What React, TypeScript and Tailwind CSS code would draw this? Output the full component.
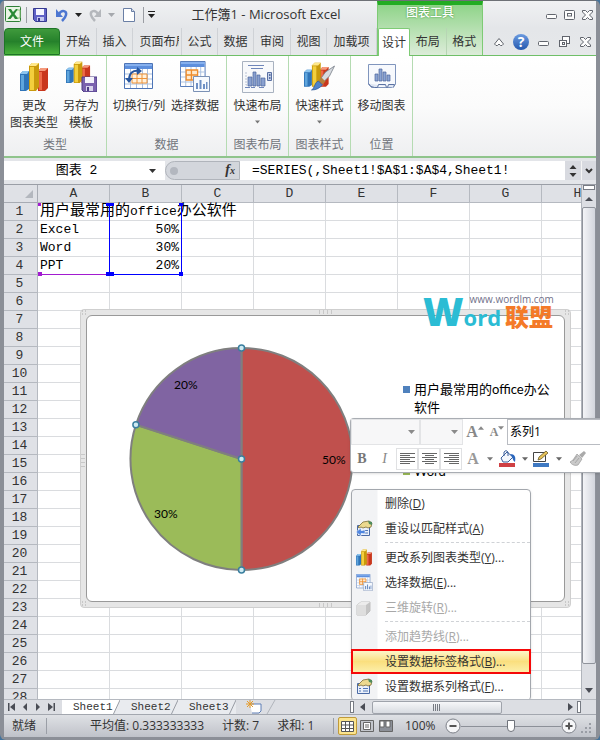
import type { ReactNode } from 'react'

const TABS = [
  { label: '开始', width: 'w-[37px]' },
  { label: '插入', width: 'w-9' },
  { label: '页面布局', width: 'w-[49px]' },
  { label: '公式', width: 'w-9' },
  { label: '数据', width: 'w-9' },
  { label: '审阅', width: 'w-[37px]' },
  { label: '视图', width: 'w-9' },
  { label: '加载项', width: 'flex-1' },
] as const

const COLUMNS = ['A', 'B', 'C', 'D', 'E', 'F', 'G', 'H'] as const

const ROWS = Array.from({ length: 28 }, (_, i) => i + 1)

const CELLS: Record<number, [string, string]> = {
  2: ['Excel', '50%'],
  3: ['Word', '30%'],
  4: ['PPT', '20%'],
}

const MONO = "font-['Liberation_Mono','Noto_Sans_CJK_SC',monospace]"

/* ── Small shared pieces ── */

function Caret({ className = 'text-[#555]' }: { className?: string }) {
  return (
    <svg width="7" height="4" viewBox="0 0 7 4" className={className} aria-hidden="true">
      <path d="M0 0h7L3.5 4z" fill="currentColor" />
    </svg>
  )
}

function Arrow({ d }: { d: string }) {
  return (
    <svg width="10" height="10" viewBox="0 0 10 10" className="text-[#4a4d55]" aria-hidden="true">
      <path d={d} fill="currentColor" />
    </svg>
  )
}

/* Three 3D columns, drawn in a 28x30 box */
function Bars() {
  return (
    <>
      <path d="M0 12l3-3h6v18l-3 2H0z" fill="#2f74b8" />
      <path d="M0 12l3-3h6l-2 3z" fill="#8cc4ee" />
      <path d="M1 13h3v15H1z" fill="#5fa5dc" />
      <path d="M18 9l3-3h7v20l-3 3h-7z" fill="#c9371d" />
      <path d="M18 9l3-3h7l-3 3z" fill="#f59a7c" />
      <path d="M19 10h3v18h-3z" fill="#ee6a48" />
      <path d="M9 4l3-3h7v24l-3 4H9z" fill="#c99a0c" />
      <path d="M9 4l3-3h7l-3 3z" fill="#ffe88a" />
      <path d="M10 5h4v23h-4z" fill="#f3cf3d" />
    </>
  )
}

function BarsIcon({ className = 'w-7 h-[30px]' }: { className?: string }) {
  return (
    <svg viewBox="0 0 28 30" className={className} aria-hidden="true">
      <Bars />
    </svg>
  )
}

function SaveTemplateIcon() {
  return (
    <svg width="31" height="31" viewBox="0 0 31 31" aria-hidden="true">
      <g transform="scale(.86 .76)">
        <Bars />
      </g>
      <path d="M16 16h15v15H18l-2-2z" fill="#7b62ae" stroke="#4d3d86" />
      <path d="M19 16h9v6h-9z" fill="#f4f2fb" />
      <path d="M20 25h7v5h-7z" fill="#d9d4ec" />
      <path d="M21 26h2v4h-2z" fill="#4d3d86" />
    </svg>
  )
}

function SheetBase() {
  return (
    <>
      <path d="M.5.5h28v25H.5z" fill="#fff" stroke="#4d74b6" />
      <path d="M1 1h27v5H1z" fill="#5d8fdd" />
      <path d="M1 1h27v2H1z" fill="#86b0ee" />
      <path d="M1 11h27M1 16h27M1 21h27M6.5 6v19M12.5 6v19M18.5 6v19M23.5 6v19" stroke="#a9bfdf" fill="none" />
    </>
  )
}

function SwapIcon() {
  return (
    <svg width="30" height="27" viewBox="0 0 30 27" aria-hidden="true">
      <SheetBase />
      <path d="M8 11h15v9H8zM13 11v9M18 11v9M8 15.5h15" fill="#fff1dd" stroke="#ee9338" />
      <path d="M5 17C5 10 9 7 15 8" fill="none" stroke="#27569f" strokeWidth="2" />
      <path d="M13 4l5 4-5 4zM1 15h8l-4 5z" fill="#27569f" />
    </svg>
  )
}

function SelectDataIcon({ className = 'w-[30px] h-[31px]' }: { className?: string }) {
  return (
    <svg viewBox="0 0 30 31" className={className} aria-hidden="true">
      <g transform="scale(.88 1)">
        <SheetBase />
        <path d="M7 9h13v10H7zM13 9v10M7 14h13" fill="#ffe9cc" stroke="#ee8c2b" strokeWidth="1.5" />
      </g>
      <path d="M13.5 15.5h16v15h-16z" fill="#f7fafe" stroke="#7b91b5" />
      <path d="M16 22h2v6h-2zM19.5 19h2v9h-2zM23 23h2v5h-2zM26 21h1.5v7H26z" fill="#6d8fc4" />
    </svg>
  )
}

function LayoutIcon() {
  return (
    <svg width="32" height="32" viewBox="0 0 32 32" aria-hidden="true">
      <path d="M.5.5h31v31H.5z" fill="#f8f9fb" stroke="#a9b2c0" />
      <path d="M6 4.5h16M9 7.5h12M3 26.5h5M9 26.5h4M17 26.5h5" stroke="#6f86ba" />
      <path d="M4 11v13h19" fill="none" stroke="#b7c0d2" strokeDasharray="2 1" />
      <path d="M6 16h4v9H6zM11 11h3v14h-3zM15 14h3v11h-3zM19 17h4v8h-4z" fill="#89a0cf" stroke="#4c649b" strokeWidth=".7" />
      <path d="M25.5 11.5h4v8h-4z" fill="#c6d2e9" stroke="#5a70a3" />
      <path d="M27 13h1.5v2H27zM27 16h1.5v2H27z" fill="#5a70a3" />
    </svg>
  )
}

function StyleIcon() {
  return (
    <svg width="31" height="30" viewBox="0 0 31 30" aria-hidden="true">
      <g transform="scale(.88 .85)">
        <Bars />
      </g>
      <path d="M30.5 4l-5 10-6 6-3-3 5-7z" fill="#d8dbe0" stroke="#777d88" strokeWidth=".8" />
      <path d="M17.5 15.5l4 4-3 3-4-4z" fill="#b67f3c" />
      <path d="M14.5 19l4 4c-3 3-6 5-11 5 3-1 3-8 7-9z" fill="#4f83c9" stroke="#2a5596" strokeWidth=".7" />
    </svg>
  )
}

function MoveChartIcon() {
  return (
    <svg width="30" height="28" viewBox="0 0 30 28" aria-hidden="true">
      <path d="M1.5 1.5h27v20l-3 3h-21l-3-3z" fill="#f7f9fd" stroke="#8095bd" />
      <path d="M1.5 20.5q2 4 6 4h3l1-3h7l1 3h1l1-3h6l-1 3" fill="#dfe6f3" stroke="#5b72a3" />
      <path d="M8 11h3v7H8zM12 6h3v12h-3zM16 9h3v9h-3zM20 12h3v6h-3z" fill="#8ba4d3" stroke="#4c649b" strokeWidth=".7" />
    </svg>
  )
}

/* Hand over a property sheet; the reset variant adds a blue arrow */
function PropertiesIcon({ reset = false }: { reset?: boolean }) {
  return (
    <svg width="17" height="17" viewBox="0 0 17 17" aria-hidden="true">
      <path d="M1.5 5.5h12v10h-12z" fill="#eaf0fb" stroke="#4a6aa5" />
      <path d="M3 10.5h2M3 13h2M7 10.5h5M7 13h5" stroke="#4f76b5" />
      <path d="M2 7l5-5 6-1 3 2-1 4-3 1-2-1-3 1-2-1-2 1z" fill="#ecd98f" stroke="#7a6a35" strokeWidth=".8" />
      <path d="M12 1l4 1v3l-3-1z" fill="#4e8b5c" />
      {reset && <path d="M0 12l5-4v2.5h4v3H5V16z" fill="#4f86e0" stroke="#fff" strokeWidth=".5" />}
    </svg>
  )
}

function CubeIcon() {
  return (
    <svg width="16" height="16" viewBox="0 0 16 16" aria-hidden="true">
      <path d="M1 5l4-3h9v9l-4 4H1z" fill="#c4c4c4" stroke="#c0c0c0" strokeLinejoin="round" />
      <path d="M1 5h9v10H1z" fill="#dedede" />
      <path d="M1 5l4-3h9l-4 3z" fill="#ececec" />
    </svg>
  )
}

/* ── Title bar and tabs ── */

function WindowGlyph({ kind }: { kind: 'min' | 'max' | 'restore' | 'close' }) {
  return (
    <svg width="13" height="12" viewBox="0 0 13 12" fill="#fdfdfd" stroke="#61656d" aria-hidden="true">
      {kind === 'min' && <rect x="1.5" y="5.5" width="10" height="4" rx="1" />}
      {kind === 'max' && (
        <>
          <rect x="1.5" y="1.5" width="10" height="9" rx="1" />
          <rect x="4.5" y="4.5" width="4" height="2.5" />
        </>
      )}
      {kind === 'restore' && (
        <>
          <rect x="4.5" y=".5" width="7" height="7" />
          <rect x="1.5" y="4.5" width="7" height="6" />
          <rect x="4.5" y="6.5" width="2" height="2" />
        </>
      )}
      {kind === 'close' && <path d="M1.5 1.5h3l2 2 2-2h3v1.5L8.5 6l3 3v1.5h-3l-2-2-2 2h-3V9l3-3-3-3z" />}
    </svg>
  )
}

function QuickAccess() {
  return (
    <div className="flex h-[27px] items-center pl-px">
      <svg width="17" height="17" viewBox="0 0 17 17" className="mr-1" aria-hidden="true">
        <rect x=".5" y=".5" width="15" height="15" rx="1" fill="#e9f5e4" stroke="#2f8037" />
        <path d="M3 3h3l2 3 3-3h2L9.500 8l4 5H10l-2-3-2.500 3H2.500L6.500 8z" fill="#2a8a35" />
        <path d="M12 4h3v8h-3" fill="none" stroke="#8abf7d" />
      </svg>
      <span className="mr-1.5 h-4 w-px bg-[#9a9da3]" />
      <button type="button" aria-label="保存">
        <svg width="14" height="14" viewBox="0 0 14 14" aria-hidden="true">
          <path d="M.5.5h13v13h-11l-2-2z" fill="#5f62c6" stroke="#363a91" />
          <path d="M3 1h8v6H3z" fill="#f5f6ff" />
          <path d="M4 9h7v4H4z" fill="#c4c8ef" />
          <path d="M5 10h2v3H5z" fill="#363a91" />
        </svg>
      </button>
      <button type="button" aria-label="撤消" className="ml-2 flex items-center gap-1.5">
        <svg width="14" height="14" viewBox="0 0 14 14" aria-hidden="true">
          <path d="M4 6c3-5 8-3 7 1-.4 2-2 4-4 6" fill="none" stroke="#4c76d1" strokeWidth="2.5" />
          <path d="M1 1v8h7z" fill="#4c76d1" />
        </svg>
        <Caret className="text-[#222]" />
      </button>
      <button type="button" aria-label="恢复" className="ml-1.5 flex items-center gap-1.5">
        <svg width="14" height="14" viewBox="0 0 14 14" aria-hidden="true">
          <path d="M10 6C7 1 2 3 3 7c.4 2 2 4 4 6" fill="none" stroke="#b4b7bc" strokeWidth="2.5" />
          <path d="M13 1v8H6z" fill="#b4b7bc" />
        </svg>
        <Caret className="text-[#a5a8ad]" />
      </button>
      <button type="button" aria-label="新建" className="ml-2">
        <svg width="12" height="14" viewBox="0 0 12 14" aria-hidden="true">
          <path d="M.5.5h8l3 3v10H.5z" fill="#fff" stroke="#6a7fa5" />
          <path d="M8.500.5v3h3" fill="#d4deee" stroke="#6a7fa5" />
        </svg>
      </button>
      <span className="mr-1 ml-2 h-4 w-px bg-[#9a9da3]" />
      <button type="button" aria-label="自定义快速访问工具栏" className="flex flex-col gap-0.5">
        <span className="h-px w-[7px] bg-[#222]" />
        <Caret className="text-[#222]" />
      </button>
    </div>
  )
}

function Header() {
  return (
    <header className="flex h-[55px] shrink-0 border-b border-[#6fbf68] bg-linear-to-b from-[#f0f1f3] via-[#e4e6e9] to-[#e6e8ea] text-xs text-[#333]">
      <div className="flex w-[373px] shrink-0 flex-col">
        <div className="flex">
          <QuickAccess />
          <h1 className="flex-1 text-center text-[13px] leading-[26px] whitespace-nowrap">工作簿1 - Microsoft Excel</h1>
        </div>
        <nav className="flex h-[27px]" aria-label="功能区">
          <button type="button" className="w-14 rounded-t-sm border border-[#1e7527] bg-linear-to-b from-[#3f9a3c] via-[#25812b] to-[#49b23c] text-white">
            文件
          </button>
          {TABS.map(({ label, width }) => (
            <button
              key={label}
              type="button"
              className={`${width} flex justify-center overflow-hidden border-r border-[#cfd2d6] whitespace-nowrap leading-7`}
            >
              <span className={label.length === 4 ? 'ml-1 w-[39px] overflow-hidden' : ''}>{label}</span>
            </button>
          ))}
        </nav>
      </div>

      {/* Contextual chart tabs */}
      <div className="flex w-[106px] shrink-0 flex-col border-x border-t-4 border-[#7ecb75] border-t-[#22ac22] bg-linear-to-b from-[#8fd489] to-[#dcecd9]">
        <div className="h-[23px] text-center leading-4 font-medium text-white [text-shadow:0_0_2px_#2f8a2c]">图表工具</div>
        <nav className="flex h-[27px]" aria-label="图表工具">
          <button type="button" className="-mb-px h-7 w-8 rounded-t-xs border border-b-0 border-[#7ecb75] bg-white leading-7">
            设计
          </button>
          <button type="button" className="flex-1 border-r border-[#b7d5b4] leading-7">布局</button>
          <button type="button" className="flex-1 leading-7">格式</button>
        </nav>
      </div>

      <div className="flex flex-1 flex-col">
        <div className="flex h-[27px] items-center justify-end gap-[5px] pr-0.5">
          <button type="button" aria-label="最小化"><WindowGlyph kind="min" /></button>
          <button type="button" aria-label="最大化"><WindowGlyph kind="max" /></button>
          <button type="button" aria-label="关闭"><WindowGlyph kind="close" /></button>
        </div>
        <div className="flex h-[27px] items-center justify-end gap-2 pr-1">
          <button type="button" aria-label="折叠功能区">
            <svg width="12" height="10" viewBox="0 0 12 10" fill="#fdfdfd" stroke="#61656d" aria-hidden="true">
              <path d="M1.500 7l4.500-5.500L10.500 7 9 8.500H7.500L6 7 4.500 8.500H3z" />
            </svg>
          </button>
          <button type="button" aria-label="帮助" className="size-4 rounded-full bg-linear-to-b from-[#6c9be0] to-[#2558ae] text-sm leading-4 font-bold text-white">
            ?
          </button>
          <button type="button" aria-label="最小化工作簿"><WindowGlyph kind="min" /></button>
          <button type="button" aria-label="还原工作簿"><WindowGlyph kind="restore" /></button>
          <button type="button" aria-label="关闭工作簿"><WindowGlyph kind="close" /></button>
        </div>
      </div>
    </header>
  )
}

/* ── Ribbon ── */

function RibbonGroup({ title, className, children }: { title: string; className: string; children: ReactNode }) {
  return (
    <section className={`${className} flex shrink-0 flex-col border-r border-[#b5dbb2]`} aria-label={title}>
      <div className="flex flex-1 justify-center">{children}</div>
      <div className="h-[22px] text-center leading-[22px] text-[#71757c]">{title}</div>
    </section>
  )
}

function RibbonButton({ icon, lines, menu, className }: { icon: ReactNode; lines: string[]; menu?: boolean; className: string }) {
  return (
    <button type="button" className={`${className} flex flex-col items-center whitespace-nowrap`}>
      <span className="flex h-[41px] items-center justify-center">{icon}</span>
      {lines.map((line) => (
        <span key={line} className="leading-[17px]">{line}</span>
      ))}
      {menu && <span className="flex h-4 items-center"><Caret className="w-[5px] text-[#777]" /></span>}
    </button>
  )
}

function Ribbon() {
  return (
    <div className="flex h-[102px] shrink-0 border-b-2 border-[#8fc48c] bg-linear-to-b from-white via-[#fbfbfb] to-[#eeeff1] text-xs text-[#333]">
      <RibbonGroup title="类型" className="w-[103px]">
        <RibbonButton icon={<BarsIcon />} lines={['更改', '图表类型']} className="w-[52px]" />
        <RibbonButton icon={<SaveTemplateIcon />} lines={['另存为', '模板']} className="w-[42px]" />
      </RibbonGroup>
      <RibbonGroup title="数据" className="w-[120px]">
        <RibbonButton icon={<SwapIcon />} lines={['切换行/列']} className="w-[57px]" />
        <RibbonButton icon={<SelectDataIcon />} lines={['选择数据']} className="w-[55px]" />
      </RibbonGroup>
      <RibbonGroup title="图表布局" className="w-[62px]">
        <RibbonButton icon={<LayoutIcon />} lines={['快速布局']} menu className="w-14" />
      </RibbonGroup>
      <RibbonGroup title="图表样式" className="w-[62px]">
        <RibbonButton icon={<StyleIcon />} lines={['快速样式']} menu className="w-14" />
      </RibbonGroup>
      <RibbonGroup title="位置" className="w-[62px]">
        <RibbonButton icon={<MoveChartIcon />} lines={['移动图表']} className="w-14" />
      </RibbonGroup>
    </div>
  )
}

function FormulaBar() {
  return (
    <div className={`${MONO} flex h-[27px] shrink-0 border-b border-[#9a9ea6] bg-[#e3e5e9] pt-[3px] pb-1 text-[13px] text-black`}>
      <input aria-label="名称框" defaultValue="图表 2" className="w-[145px] min-w-0 bg-white text-center outline-none" />
      <button type="button" aria-label="名称列表" className="flex w-4 items-center bg-white">
        <Caret className="text-[#333]" />
      </button>
      <div className="flex w-[75px] items-center justify-between rounded-l-full border border-[#b0b4bb] bg-[#d3d6dc] pr-1 pl-1">
        <span className="size-2 rounded-full bg-[#b3b7bf]" />
        <button type="button" aria-label="插入函数" className="font-['Liberation_Serif',serif] text-sm leading-4 font-bold text-[#333] italic">
          f<span className="text-[10px]">x</span>
        </button>
      </div>
      <input aria-label="编辑栏" defaultValue="=SERIES(,Sheet1!$A$1:$A$4,Sheet1!" className="min-w-0 flex-1 bg-white pl-3 outline-none" />
      <div className="flex w-4 flex-col items-center justify-center gap-1 bg-[#d8dae0]">
        <Caret className="w-2 rotate-180 text-[#333]" />
        <Caret className="w-2 text-[#333]" />
      </div>
      <button type="button" aria-label="展开编辑栏" className="flex w-[15px] items-center justify-center border-l border-[#f5f5f5] bg-[#d8dae0]">
        <svg width="8" height="6" viewBox="0 0 8 6" fill="none" stroke="#333" strokeWidth="2" aria-hidden="true">
          <path d="M1 1l3 3 3-3" />
        </svg>
      </button>
    </div>
  )
}

/* ── Worksheet ── */

function Worksheet() {
  return (
    <table className={`${MONO} w-[610px] table-fixed border-separate border-spacing-0 text-[13px] leading-[17px] text-black`}>
      <colgroup>
        <col className="w-[34px]" />
        {COLUMNS.map((c) => <col key={c} className="w-[72px]" />)}
      </colgroup>
      <thead>
        <tr className="h-[18px] bg-[#dfe1e6] text-[#333]">
          <th className="border-r border-b border-[#a7abb3] p-0">
            <svg width="8" height="8" viewBox="0 0 8 8" className="mr-1 ml-auto" aria-hidden="true">
              <path d="M8 0v8H0z" fill="#b3b7be" />
            </svg>
          </th>
          {COLUMNS.map((c) => (
            <th key={c} scope="col" className="border-r border-b border-[#b5b9c0] p-0 font-normal">{c}</th>
          ))}
        </tr>
      </thead>
      <tbody>
        {ROWS.map((row) => (
          <tr key={row} className="h-[18px]">
            <th scope="row" className="border-r border-b border-[#b5b9c0] bg-[#dfe1e6] p-0 pr-0.5 font-normal text-[#333]">{row}</th>
            {COLUMNS.map((c, i) => (
              <td
                key={c}
                className={`border-r border-b border-[#dadcdf] p-0 whitespace-nowrap ${i === 1 ? 'pr-0.5 text-right' : 'pl-0.5'}`}
              >
                {row === 1 && i === 0 ? (
                  <div className="h-[17px] w-0 text-[15px] leading-[17px]">
                    用户最常用的<span className="text-[13px]">office</span>办公软件
                  </div>
                ) : (
                  CELLS[row]?.[i]
                )}
              </td>
            ))}
          </tr>
        ))}
      </tbody>
    </table>
  )
}

/* Coloured range outlines: categories in purple, values in blue */
function RangeMarks() {
  return (
    <>
      <div className="absolute top-[18px] left-[34px] h-[72px] w-[72px] border-b border-b-[#a21bd0]">
        <span className="absolute top-0 left-0 size-[3px] bg-[#a21bd0]" />
        <span className="absolute -bottom-0.5 left-0 size-1 bg-[#a21bd0]" />
      </div>
      <div className="absolute top-[18px] left-[105px] h-[72px] w-[73px] border-x border-b border-x-[#0000ff] border-b-[#0000ff]">
        <span className="absolute top-0 -left-1 h-[3px] w-2 bg-[#0000ff]" />
        <span className="absolute top-0 -right-0.5 h-[3px] w-1 bg-[#0000ff]" />
        <span className="absolute -bottom-0.5 -left-1 h-1 w-2 bg-[#0000ff]" />
        <span className="absolute -right-0.5 -bottom-0.5 size-1 bg-[#0000ff]" />
      </div>
    </>
  )
}

const HANDLES = [
  [114.5, 4],
  [114.5, 115],
  [114.5, 226],
  [8.9, 80.7],
] as const

const LEGEND = [
  { label: '用户最常用的office办公软件', color: 'bg-[#4f81bd]' },
  { label: 'Excel', color: 'bg-[#c0504d]' },
  { label: 'Word', color: 'bg-[#9bbb59]' },
  { label: 'PPT', color: 'bg-[#8064a2]' },
] as const

function Grip({ className }: { className: string }) {
  return (
    <svg width="16" height="4" viewBox="0 0 16 4" className={`absolute ${className}`} aria-hidden="true">
      <path d="M1 1h14M1 3h14" stroke="#aaa" strokeDasharray="1 3" />
    </svg>
  )
}

/* Dotted handle on a corner of the chart frame */
function CornerGrip({ className }: { className: string }) {
  return (
    <svg width="6" height="6" viewBox="0 0 6 6" className={`absolute ${className}`} aria-hidden="true">
      <path d="M1 1h4M1 4h4" stroke="#aaa" strokeDasharray="1 2" />
    </svg>
  )
}

function Chart() {
  return (
    <figure className="absolute top-[124px] left-[76px] w-[491px] rounded-sm border border-[#cfcfcf] bg-[#e6e6e6] p-[5px]">
      <Grip className="top-0 left-1/2 -translate-x-1/2" />
      <Grip className="bottom-0 left-1/2 -translate-x-1/2" />
      <Grip className="top-1/2 -left-1.5 rotate-90" />
      <CornerGrip className="top-0 left-0" />
      <CornerGrip className="top-0 right-0" />
      <CornerGrip className="right-0 bottom-0" />
      <CornerGrip className="bottom-0 left-0" />
      <div className="flex h-[287px] rounded-md border border-[#999] bg-white pl-10 font-[Lato,'Noto_Sans_CJK_SC',sans-serif] text-[13px] text-black">
        <svg width="230" height="230" viewBox="0 0 230 230" className="mt-7 shrink-0 text-xs" role="img" aria-label="饼图">
          <g stroke="#7f7f7f" strokeWidth="2">
            <path d="M114.5 115V4a111 111 0 0 1 0 222z" fill="#c0504d" />
            <path d="M114.5 115v111A111 111 0 0 1 8.900 80.700z" fill="#9bbb59" />
            <path d="M114.5 115L8.900 80.700A111 111 0 0 1 114.500 4z" fill="#8064a2" />
          </g>
          <text x="195" y="120">50%</text>
          <text x="27" y="174">30%</text>
          <text x="47" y="45">20%</text>
          {HANDLES.map(([cx, cy]) => (
            <circle key={`${cx}-${cy}`} cx={cx} cy={cy} r="3" fill="#cfeaf2" stroke="#3a7f9f" strokeWidth="1.5" />
          ))}
        </svg>
        <ul className="mt-16 ml-[46px] flex w-[150px] flex-col gap-3.5">
          {LEGEND.map(({ label, color }) => (
            <li key={label} className="flex items-start gap-1 leading-[18px]">
              <span className={`mt-1.5 size-[7px] shrink-0 ${color}`} />
              <span className="break-all">{label}</span>
            </li>
          ))}
        </ul>
      </div>
    </figure>
  )
}

function Watermark() {
  return (
    <div className="absolute top-[108px] left-[419px] flex whitespace-nowrap font-['Open_Sans','Noto_Sans_CJK_SC',sans-serif] font-bold text-[#2bbcd4]">
      <span className="text-[39px] leading-9 font-extrabold">W</span>
      <div className="flex flex-col">
        <span className="pl-1.5 text-[10px] leading-3 font-normal text-[#71718a]">www.wordlm.com</span>
        <span className="flex text-[22px] leading-6">
          ord
          <span className="ml-1 text-2xl leading-6 font-black text-[#f47a28]">联盟</span>
        </span>
      </div>
    </div>
  )
}

/* ── Context menu ── */

function MenuItem({ icon, text, accessKey, tail = '...', disabled, active }: {
  icon?: ReactNode
  text: string
  accessKey: string
  tail?: string
  disabled?: boolean
  active?: boolean
}) {
  return (
    <li
      className={
        active
          ? '-mx-px border-2 border-[#f50808] bg-linear-to-b from-[#fdf5c9] via-[#fadf7e] to-[#fcefa9]'
          : 'border-x border-transparent'
      }
    >
      <button
        type="button"
        role="menuitem"
        disabled={disabled}
        className={`flex w-full items-center text-left ${active ? 'h-[21px]' : 'h-[25px]'} ${disabled ? 'text-[#a8a8a8]' : 'text-[#333]'}`}
      >
        <span className="flex w-8 shrink-0 pl-[3px]">{icon}</span>
        <span>
          {text}(<u>{accessKey}</u>){tail}
        </span>
      </button>
    </li>
  )
}

function MenuRule() {
  return <li role="separator" className="my-px ml-[33px] h-0.5 border-t border-dashed border-[#cfd2d6]" />
}

function ContextMenu() {
  return (
    <ul
      role="menu"
      className="absolute top-[304px] left-[347px] w-[180px] rounded-sm border border-[#a3a7ad] bg-linear-to-r from-[#f2f3f5] from-[25px] to-white to-[26px] py-px text-xs shadow-sm"
    >
      <MenuItem text="删除" accessKey="D" tail="" />
      <MenuItem icon={<PropertiesIcon reset />} text="重设以匹配样式" accessKey="A" tail="" />
      <MenuRule />
      <MenuItem icon={<BarsIcon className="h-[17px] w-4" />} text="更改系列图表类型" accessKey="Y" />
      <MenuItem icon={<SelectDataIcon className="h-[17px] w-[17px]" />} text="选择数据" accessKey="E" />
      <MenuItem icon={<CubeIcon />} text="三维旋转" accessKey="R" disabled />
      <MenuRule />
      <MenuItem text="添加趋势线" accessKey="R" disabled />
      <MenuItem text="设置数据标签格式" accessKey="B" active />
      <MenuItem icon={<PropertiesIcon />} text="设置数据系列格式" accessKey="F" />
    </ul>
  )
}

/* ── Floating format toolbar ── */

function AlignIcon({ d }: { d: string }) {
  return (
    <svg width="15" height="13" viewBox="0 0 15 13" stroke="#666" aria-hidden="true">
      <path d={d} />
    </svg>
  )
}

function EmptySelect({ label, className }: { label: string; className: string }) {
  return (
    <span className={`${className} flex items-center border border-[#e3e4e6] bg-[#f7f7f8] pr-1`}>
      <select aria-label={label} className="min-w-0 flex-1 appearance-none self-stretch outline-none">
        <option value="" />
      </select>
      <Caret className="text-[#8a8a8a]" />
    </span>
  )
}

function MiniToolbar() {
  return (
    <div className="absolute top-[418px] right-0 w-[250px] rounded-l-sm border border-r-0 border-[#a9adb3] bg-white text-xs text-black shadow-sm" role="toolbar" aria-label="格式">
      <div className="flex h-[26px]">
        <EmptySelect label="字体" className="w-[69px]" />
        <EmptySelect label="字号" className="w-[43px]" />
        <button type="button" aria-label="增大字体" className="flex w-6 items-center justify-center font-['Liberation_Serif',serif] text-base font-bold text-[#888]">
          A<Caret className="-mt-2 w-1.5 rotate-180 text-[#888]" />
        </button>
        <button type="button" aria-label="减小字体" className="flex w-5 items-center justify-center font-['Liberation_Serif',serif] text-xs font-bold text-[#888]">
          A<Caret className="-mt-2 w-1.5 text-[#888]" />
        </button>
        <select aria-label="图表元素" className="min-w-0 flex-1 appearance-none border border-r-0 border-[#b9bcc2] bg-white pl-0.5 outline-none">
          <option>系列1</option>
        </select>
      </div>
      <div className="flex h-[27px] items-center">
        <button type="button" aria-label="加粗" className="w-[22px] font-['Liberation_Serif',serif] text-sm font-bold text-[#777]">B</button>
        <button type="button" aria-label="倾斜" className="w-[23px] font-['Liberation_Serif',serif] text-sm text-[#888] italic">I</button>
        <button type="button" aria-label="左对齐" className="flex h-[22px] w-[22px] items-center justify-center border border-[#e0e1e3]">
          <AlignIcon d="M0 1.5h15M0 3.5h10M0 5.5h15M0 7.5h10M0 9.5h15M0 11.5h10" />
        </button>
        <button type="button" aria-label="居中" className="flex h-[22px] w-[22px] items-center justify-center border border-[#e0e1e3]">
          <AlignIcon d="M0 1.5h15M3 3.5h9M0 5.5h15M3 7.5h9M0 9.5h15M3 11.5h9" />
        </button>
        <button type="button" aria-label="右对齐" className="flex h-[22px] w-[22px] items-center justify-center border border-[#e0e1e3]">
          <AlignIcon d="M0 1.5h15M5 3.5h10M0 5.5h15M5 7.5h10M0 9.5h15M5 11.5h10" />
        </button>
        <button type="button" aria-label="字体颜色" className="flex w-9 items-center justify-center gap-2 font-['Liberation_Serif',serif] text-base font-bold text-[#999]">
          A<Caret className="w-1.5 text-[#777]" />
        </button>
        <button type="button" aria-label="填充颜色" className="flex w-[35px] items-center gap-1.5 pl-px">
          <svg width="17" height="17" viewBox="0 0 17 17" aria-hidden="true">
            <path d="M8 2l6 5-5 5H4L2 8z" fill="#f4f7fc" stroke="#3a5e9c" />
            <path d="M5 6V2q2-3 4 0v4" fill="none" stroke="#3a5e9c" />
            <path d="M11 4c5 0 6 3 5 8-2-1-2-3-3-5z" fill="#2a66bd" />
            <path d="M0 13h16v4H0z" fill="#cf4044" />
          </svg>
          <Caret className="w-1.5 text-[#666]" />
        </button>
        <button type="button" aria-label="轮廓颜色" className="flex w-[35px] items-center gap-1.5">
          <svg width="17" height="17" viewBox="0 0 17 17" aria-hidden="true">
            <path d="M.5 2.5h12v9H.5z" fill="#fff" stroke="#444" />
            <path d="M5 10l1-3 7-6 2 2-7 6z" fill="#e8c35a" stroke="#6a5a2a" strokeWidth=".8" />
            <path d="M0 13h16v4H0z" fill="#3f79c2" />
          </svg>
          <Caret className="w-1.5 text-[#666]" />
        </button>
        <button type="button" aria-label="格式刷" className="ml-0.5">
          <svg width="16" height="15" viewBox="0 0 16 15" aria-hidden="true">
            <path d="M14 0l2 2-4 5-3-3z" fill="#aaa" />
            <path d="M7 3l5 5-4 6c-3 1-6 0-8-3l3-2z" fill="#c9c9c9" stroke="#999" strokeWidth=".7" />
            <path d="M3 10l4-5M5 12l4-5" stroke="#999" strokeWidth=".7" />
          </svg>
        </button>
      </div>
    </div>
  )
}

/* ── Scroll bars, sheet tabs, status bar ── */

function VerticalScroll() {
  return (
    <div className="flex w-[15px] shrink-0 flex-col items-center border-l border-[#b0b4bb] bg-[#dcdee3]">
      <span className="h-[5px] w-3 shrink-0 border border-[#777b83] bg-white" />
      <button type="button" aria-label="向上滚动" className="flex h-[17px] items-center"><Arrow d="M1 7l4-4 4 4z" /></button>
      <span className="w-full flex-1 rounded-xs border border-[#8f939b] bg-linear-to-r from-[#f3f4f7] to-[#d3d6dd]" />
      <button type="button" aria-label="向下滚动" className="flex h-[35px] items-end pb-1"><Arrow d="M1 3h8L5 8z" /></button>
    </div>
  )
}

function SheetTab({ name, active }: { name: string; active?: boolean }) {
  return (
    <button
      type="button"
      className={`flex h-[15px] w-[58px] shrink-0 items-center justify-between pl-[11px] text-[#333] ${active ? 'bg-white' : 'bg-[#e9ebef]'}`}
    >
      <span className="w-0 whitespace-nowrap">{name}</span>
      <svg width="7" height="15" viewBox="0 0 7 15" className="shrink-0" aria-hidden="true">
        <path d="M7 0v15H0z" fill="#e9ebef" />
        <path d="M7 0L0 15" stroke="#989ca4" />
      </svg>
    </button>
  )
}

function SheetBar() {
  return (
    <div className="flex h-[15px] shrink-0 items-center border-t border-[#b5b9c0] bg-[#dcdee3]">
      <div className="flex w-[58px] items-center justify-between pr-1.5 pl-[3px]">
        <button type="button" aria-label="第一张工作表"><Arrow d="M1 1h1.500v8H1zM8 1v8L3 5z" /></button>
        <button type="button" aria-label="上一张工作表"><Arrow d="M7 1v8L3 5z" /></button>
        <button type="button" aria-label="下一张工作表"><Arrow d="M3 1v8l4-4z" /></button>
        <button type="button" aria-label="最后一张工作表"><Arrow d="M2 1v8l5-4zM7.500 1H9v8H7.500z" /></button>
      </div>
      <div className={`${MONO} flex text-[11px]`}>
        <SheetTab name="Sheet1" active />
        <SheetTab name="Sheet2" />
        <SheetTab name="Sheet3" />
      </div>
      <button type="button" aria-label="插入工作表" className="pl-2.5">
        <svg width="30" height="14" viewBox="0 0 30 14" aria-hidden="true">
          <path d="M4 4h11v7l-2 2H6" fill="#fff" stroke="#5c7db5" />
          <path d="M4 0v8M0 4h8M1 1l6 6M7 1L1 7" stroke="#e59b2a" />
          <path d="M29 0l-8 14" stroke="#b0b4bb" />
        </svg>
      </button>
      <div className="ml-auto flex h-[14px] w-[246px] items-center">
        <span className="h-3 w-1 border border-[#777b83] bg-white" />
        <button type="button" aria-label="向左滚动" className="px-1"><Arrow d="M7 1v8L2 5z" /></button>
        <span className="flex h-[13px] w-[130px] items-center justify-center rounded-xs border border-[#9fa3ab] bg-linear-to-b from-[#f6f7f9] to-[#d8dbe1]">
          <svg width="8" height="7" viewBox="0 0 8 7" stroke="#777b83" aria-hidden="true">
            <path d="M.5 0v7M2.500 0v7M4.500 0v7M6.500 0v7" />
          </svg>
        </span>
        <button type="button" aria-label="向右滚动" className="ml-auto px-0.5"><Arrow d="M3 1v8l5-4z" /></button>
        <span className="mr-[15px] h-3 w-1 border border-[#777b83] bg-white" />
      </div>
    </div>
  )
}

function ZoomButton({ label, d }: { label: string; d: string }) {
  return (
    <button type="button" aria-label={label}>
      <svg width="16" height="16" viewBox="0 0 16 16" aria-hidden="true">
        <circle cx="8" cy="8" r="7" fill="#f5f6f8" stroke="#7d8189" />
        <path d={d} stroke="#555" strokeWidth="2" />
      </svg>
    </button>
  )
}

function StatusBar() {
  return (
    <footer className="flex h-[23px] shrink-0 items-center border-t border-[#a3a7af] bg-linear-to-b from-[#dfe1e5] to-[#bfc2c9] text-xs whitespace-nowrap text-[#333]">
      <span className="w-[42px] pl-2">就绪</span>
      <span className="h-4 w-px bg-[#9a9ea6]" />
      <span className="ml-[43px]">平均值: 0.333333333</span>
      <span className="ml-[18px]">计数: 7</span>
      <span className="ml-[18px]">求和: 1</span>
      <div className="ml-auto flex items-center">
        <span className="mr-1 h-4 w-px bg-[#9a9ea6]" />
        <button type="button" aria-label="普通视图" className="flex h-[18px] w-[19px] items-center justify-center rounded-xs border border-[#c09a3a] bg-[#fbe48d]">
          <svg width="13" height="11" viewBox="0 0 13 11" fill="#fff" stroke="#555" aria-hidden="true">
            <path d="M.5.5h12v10H.5zM4.500.5v10M8.500.5v10M.5 4h12M.5 7.500h12" />
          </svg>
        </button>
        <button type="button" aria-label="页面布局" className="ml-[3px]">
          <svg width="14" height="12" viewBox="0 0 14 12" fill="#c3c6cc" stroke="#666" aria-hidden="true">
            <path d="M.5.5h13v11H.5z" />
            <path d="M3.500 2.500h7v7h-7zM5 5h4M5 7h4" fill="#fff" />
          </svg>
        </button>
        <button type="button" aria-label="分页预览" className="ml-[5px]">
          <svg width="14" height="12" viewBox="0 0 14 12" fill="#8c9098" stroke="#666" aria-hidden="true">
            <path d="M.5.5h13v11H.5z" />
            <path d="M1 1h4v6H1zM7 1h4v6H7z" fill="#fff" />
          </svg>
        </button>
        <button type="button" className="ml-3 w-10 text-left">100%</button>
        <ZoomButton label="缩小" d="M4.500 8h7" />
        <input
          aria-label="显示比例"
          type="range"
          defaultValue={50}
          className="h-4 w-[100px] appearance-none bg-[linear-gradient(#8c9098,#8c9098)] bg-[length:100%_1px] bg-center bg-no-repeat [&::-webkit-slider-thumb]:h-3 [&::-webkit-slider-thumb]:w-2 [&::-webkit-slider-thumb]:appearance-none [&::-webkit-slider-thumb]:rounded-b-full [&::-webkit-slider-thumb]:border [&::-webkit-slider-thumb]:border-[#6f737b] [&::-webkit-slider-thumb]:bg-white"
        />
        <ZoomButton label="放大" d="M4.500 8h7M8 4.500v7" />
        <svg width="12" height="12" viewBox="0 0 12 12" className="mt-1.5 mr-[3px] ml-1" aria-hidden="true">
          <path d="M8 1h2M4 5h2M8 5h2M0 9h2M4 9h2M8 9h2" stroke="#999da5" strokeWidth="2" />
        </svg>
      </div>
    </footer>
  )
}

export default function App() {
  return (
    <div className="relative flex h-screen w-full flex-col overflow-hidden bg-[#44739c] font-['Open_Sans','Noto_Sans_CJK_SC',sans-serif]">
      <div className="flex min-h-0 flex-1 flex-col rounded-md border-t border-r-4 border-b-3 border-l-4 border-[#8b8f97] border-t-[#6e7177] bg-[#e3e5e9]">
        <Header />
        <Ribbon />
        <FormulaBar />
        <main className="flex min-h-0 flex-1">
          <div className="relative min-w-0 flex-1 overflow-hidden bg-white">
            <Worksheet />
            <RangeMarks />
            <Chart />
            <Watermark />
            <ContextMenu />
          </div>
          <VerticalScroll />
        </main>
        <SheetBar />
        <StatusBar />
      </div>
      <MiniToolbar />
    </div>
  )
}
